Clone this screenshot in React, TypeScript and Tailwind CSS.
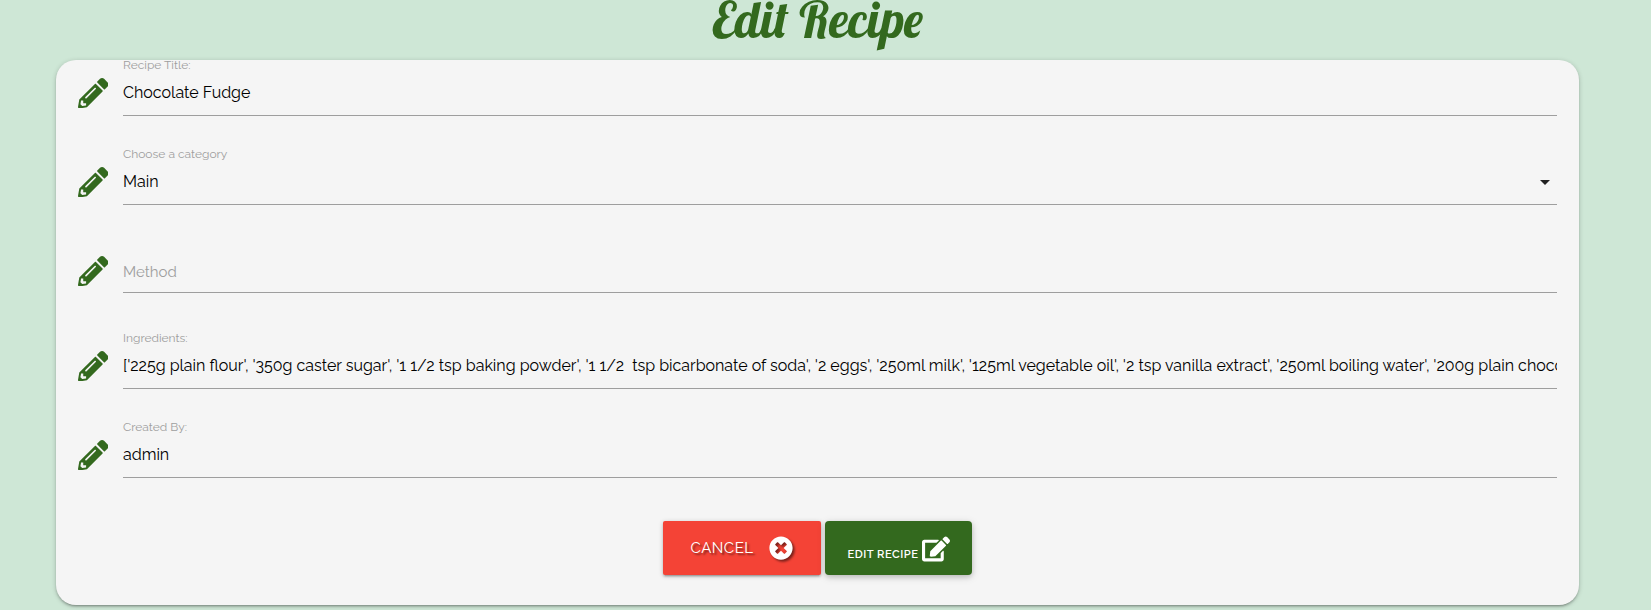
import type { ReactNode } from "react";
import { FaEdit, FaPencilAlt, FaTimesCircle } from "react-icons/fa";

type FieldProps = { label?: string; row: string; iconPad?: string; children: ReactNode };

function Field({ label, row, iconPad = "pb-[8px]", children }: FieldProps) {
  return (
    <div className={`flex items-end ${row}`}>
      <div className={`w-[46px] shrink-0 pl-[0.5px] ${iconPad}`}>
        <FaPencilAlt className="size-[30.5px] text-[#33691e]" />
      </div>
      <div className="flex min-w-0 flex-1 flex-col border-b border-[#9e9e9e]">
        {label && <label className="self-start text-[12px] leading-[14px] text-[#9e9e9e]">{label}</label>}
        {children}
      </div>
    </div>
  );
}

const value = "h-[43px] overflow-hidden whitespace-pre text-[16px] leading-[42px] text-black oldstyle-nums";

export default function App() {
  return (
    <div className="flex h-[610px] flex-col items-center overflow-hidden bg-[#cee7d6] pr-4 font-['Raleway','Lato',sans-serif]">
      <h1 className="h-[60px] shrink-0 font-['Lobster','Liberation_Serif',cursive] text-[50px] leading-[40px] text-[#33691e]">Edit Recipe</h1>
      <main className="flex h-[545px] w-[1523px] shrink-0 flex-col rounded-[20px] bg-[#f5f5f5] pr-[22px] pl-[21px] shadow-[0_2px_2px_0_rgba(0,0,0,0.14),0_3px_1px_-2px_rgba(0,0,0,0.12),0_1px_5px_0_rgba(0,0,0,0.2)]">
        <Field label="Recipe Title:" row="h-[56px]">
          <div className={value}>Chocolate Fudge</div>
        </Field>
        <Field label="Choose a category" row="h-[89px]">
          <div className={`flex justify-between pr-[7px] ${value}`}>
            <span>Main</span>
            <svg viewBox="0 0 10 5" className="mt-[19px] h-[5px] w-[10px] fill-[#212121]">
              <path d="M0 0h10L5 5z" />
            </svg>
          </div>
        </Field>
        <Field row="h-[88px]" iconPad="pb-[7px]">
          <div className="h-[40px] text-[15px] leading-[40px] text-[#9e9e9e]">Method</div>
        </Field>
        <Field label="Ingredients:" row="h-[96px]">
          <div className={value}>
            {"['225g plain flour', '350g caster sugar', '1 1/2 tsp baking powder', '1 1/2  tsp bicarbonate of soda', '2 eggs', '250ml milk', '125ml vegetable oil', '2 tsp vanilla extract', '250ml boiling water', '200g plain chocolate']"}
          </div>
        </Field>
        <Field label="Created By:" row="h-[89px]">
          <div className={value}>admin</div>
        </Field>
        <div className="mt-[43px] flex justify-center gap-1">
          <button className="flex h-[54px] w-[158px] items-center rounded-[2px] bg-[#f44336] pl-[28px] text-[15px] tracking-[0.5px] text-white shadow-[0_2px_2px_0_rgba(0,0,0,0.14),0_3px_1px_-2px_rgba(0,0,0,0.12),0_1px_5px_0_rgba(0,0,0,0.2)] text-shadow-[2px_2px_2px_rgba(0,0,0,0.5)]">
            <span>CANCEL</span>
            <FaTimesCircle className="ml-[15px] size-[24px] drop-shadow-[2px_2px_1px_rgba(0,0,0,0.5)]" />
          </button>
          <button className="flex h-[54px] w-[147px] rounded-[4px] bg-[#33691e] pl-[23px] text-[11.2px] leading-[18px] font-semibold tracking-[0.5px] text-white shadow-[0_2px_5px_0_rgba(0,0,0,0.16),0_2px_10px_0_rgba(0,0,0,0.12)]">
            <span className="mt-[24px]">EDIT RECIPE</span>
            <FaEdit className="mt-[14px] ml-[3px] size-[28px]" />
          </button>
        </div>
      </main>
    </div>
  );
}
